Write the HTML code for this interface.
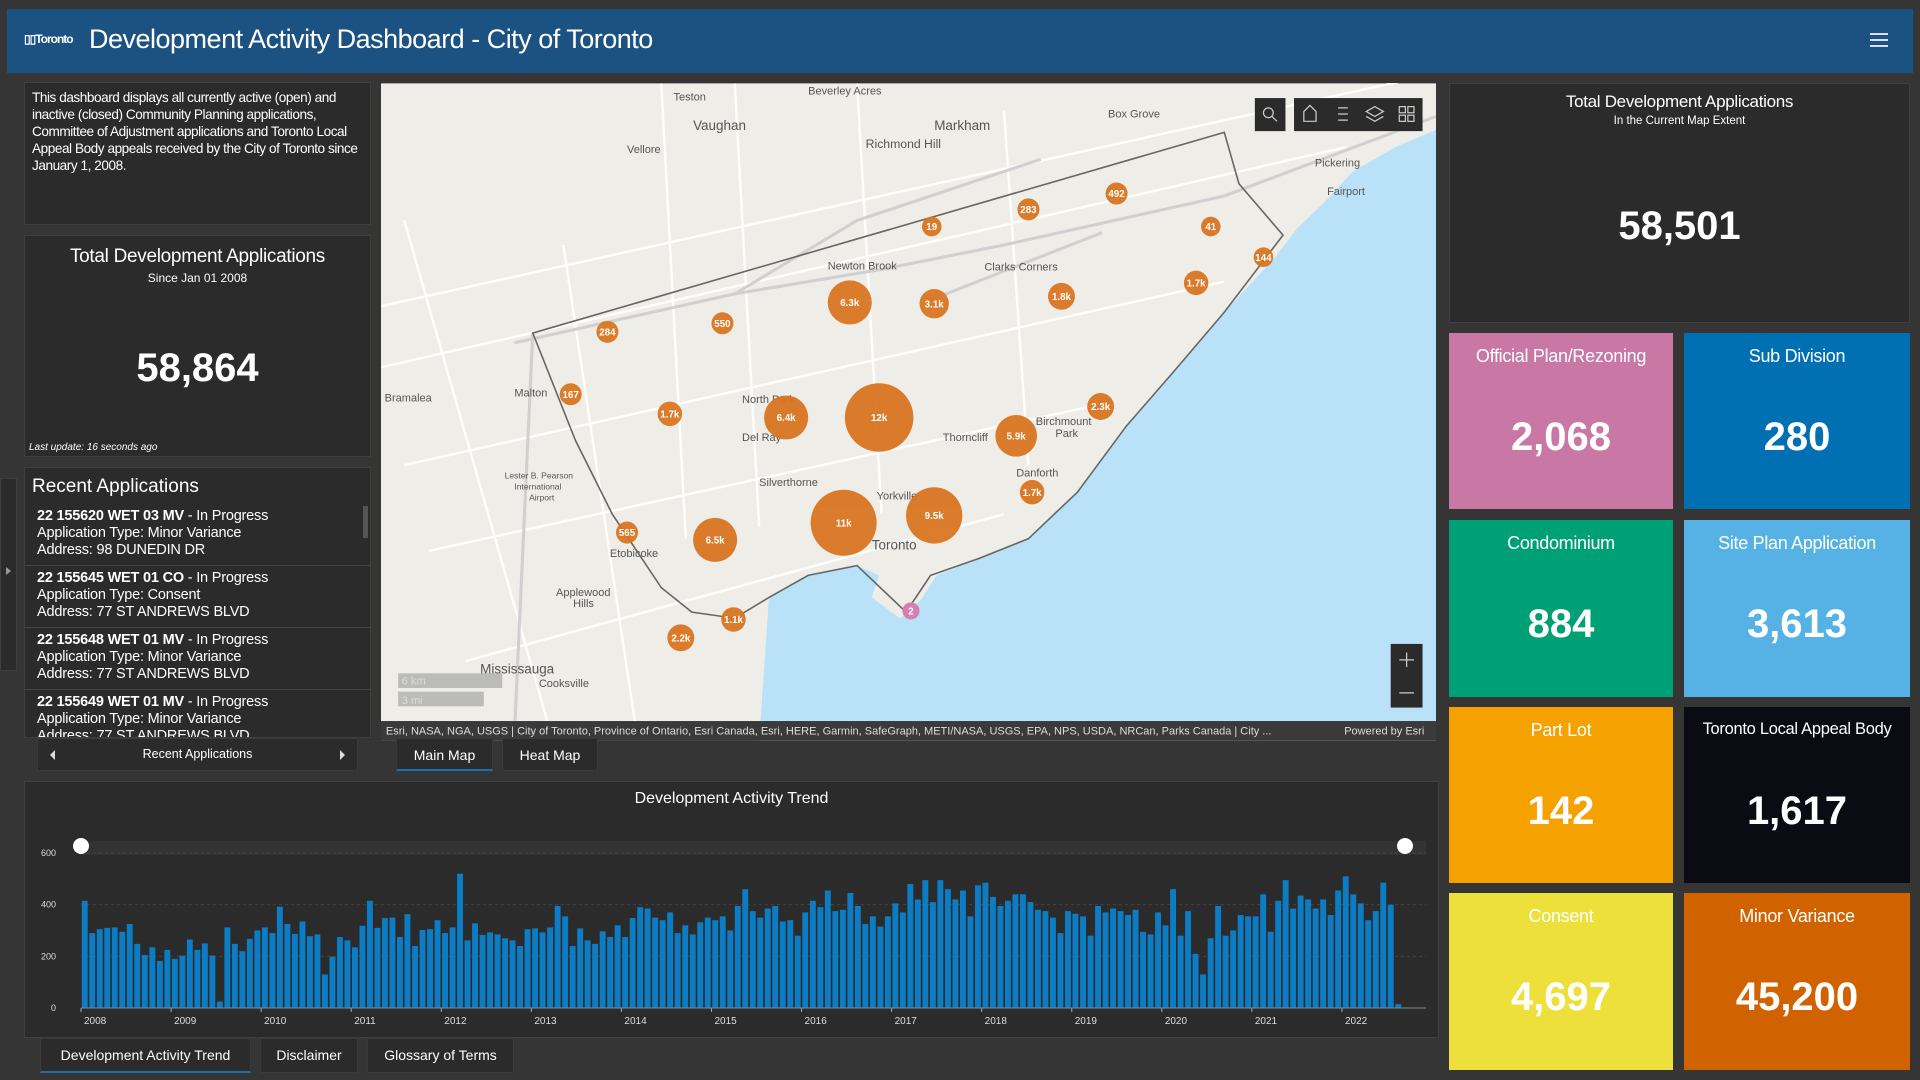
<!DOCTYPE html>
<html><head><meta charset="utf-8"><style>
*{box-sizing:border-box;margin:0;padding:0}
body{width:1920px;height:1080px;background:#353535;font-family:"Liberation Sans",sans-serif;color:#fff;position:relative;overflow:hidden}
.abs{position:absolute}
.panel{position:absolute;background:#2b2b2b;border:1px solid #3f3f3f}
.hdr{left:7px;top:9px;width:1906px;height:64px;background:#1c5282}
.tile{position:absolute;text-align:center;color:#fff}
.tile .t{position:absolute;top:13px;left:0;right:0;font-size:18px;letter-spacing:-0.3px}
.tile .n{position:absolute;top:82px;left:0;right:0;font-size:40px;font-weight:bold}
.item{border-bottom:1px solid #444;padding:4px 0 4px 12px;font-size:14.5px;line-height:17px;height:62px;letter-spacing:-0.2px}
.tab{position:absolute;background:#2b2b2b;border:1px solid #3a3a3a;font-size:14px;text-align:center;line-height:32px}
</style></head><body>
<div class="abs hdr"></div>
<div class="abs" style="left:24px;top:32px;font-size:12px;font-weight:bold;letter-spacing:-1px">▯▯Toronto</div>
<div class="abs" style="left:89px;top:24px;font-size:27px;letter-spacing:-0.5px">Development Activity Dashboard - City of Toronto</div>
<div class="abs" style="left:1870px;top:33px;width:18px;height:2px;background:#ddd;box-shadow:0 6px 0 #ddd,0 12px 0 #ddd"></div>

<div class="panel" style="left:24px;top:82px;width:347px;height:143px;padding:6px 7px;font-size:13.6px;line-height:17px;letter-spacing:-0.45px">This dashboard displays all currently active (open) and inactive (closed) Community Planning applications, Committee of Adjustment applications and Toronto Local Appeal Body appeals received by the City of Toronto since January 1, 2008.</div>

<div class="panel" style="left:24px;top:235px;width:347px;height:222px;text-align:center">
<div style="margin-top:10px;font-size:19px;letter-spacing:-0.3px">Total Development Applications</div>
<div style="font-size:12px;margin-top:3px">Since Jan 01 2008</div>
<div style="position:absolute;top:110px;left:0;right:0;font-size:40px;font-weight:bold">58,864</div>
<div style="position:absolute;left:4px;bottom:3px;font-size:10px;font-style:italic">Last update: 16 seconds ago</div>
</div>

<div class="abs" style="left:0;top:478px;width:17px;height:193px;background:#2b2b2b;border:1px solid #3f3f3f"><div style="position:absolute;top:88px;left:5px;width:0;height:0;border-left:5px solid #999;border-top:4px solid transparent;border-bottom:4px solid transparent"></div></div>

<div class="panel" style="left:24px;top:467px;width:347px;height:271px;overflow:hidden">
<div style="font-size:19px;padding:8px 7px 6px">Recent Applications</div>
<div class="item"><b>22 155620 WET 03 MV</b> - In Progress<br>Application Type: Minor Variance<br>Address: 98 DUNEDIN DR</div>
<div class="item"><b>22 155645 WET 01 CO</b> - In Progress<br>Application Type: Consent<br>Address: 77 ST ANDREWS BLVD</div>
<div class="item"><b>22 155648 WET 01 MV</b> - In Progress<br>Application Type: Minor Variance<br>Address: 77 ST ANDREWS BLVD</div>
<div class="item"><b>22 155649 WET 01 MV</b> - In Progress<br>Application Type: Minor Variance<br>Address: 77 ST ANDREWS BLVD</div>
<div style="position:absolute;right:2px;top:38px;width:5px;height:32px;background:#555"></div>
</div>
<div class="abs" style="left:37px;top:738px;width:321px;height:33px;background:#2b2b2b;border:1px solid #3a3a3a;font-size:12.5px;text-align:center;line-height:31px">Recent Applications
<span style="position:absolute;left:12px;top:11px;border-right:5px solid #ddd;border-top:5px solid transparent;border-bottom:5px solid transparent"></span>
<span style="position:absolute;right:12px;top:11px;border-left:5px solid #ddd;border-top:5px solid transparent;border-bottom:5px solid transparent"></span></div>

<!-- MAP -->
<svg class="abs" style="left:381px;top:83px" width="1055" height="658" viewBox="311 68 862 537" font-family="Liberation Sans,sans-serif">
<rect x="311" y="68" width="862" height="537" fill="#eeede8"/>
<path d="M620 605 L628 488 L660 470 L700 462 L718 470 L712 488 L735 505 L752 490 L765 470 L800 456 L840 440 L880 402 L920 348 L960 302 L1000 255 L1040 212 L1060 186 L1082 165 L1105 140 L1140 120 L1173 106 L1173 605 Z" fill="#b9e2f8"/>
<g stroke="#fff" stroke-width="2" fill="none" opacity=".9">
<path d="M311 250 L1173 60"/><path d="M311 300 L1100 120"/><path d="M330 380 L1000 230"/><path d="M350 450 L900 330"/>
<path d="M380 540 L820 420"/><path d="M540 68 L560 440"/><path d="M600 68 L620 430"/><path d="M700 68 L720 420"/><path d="M820 90 L840 380"/><path d="M460 200 L520 600"/><path d="M330 180 L450 600"/>
</g>
<g stroke="#d0d0d0" stroke-width="2.5" fill="none">
<path d="M420 280 L600 240 L720 220 L820 200 L1000 160 L1173 95"/><path d="M435 272 L420 600"/><path d="M600 240 L700 180 L850 130"/><path d="M760 245 L900 190"/>
</g>
<path d="M435 272 L1000 108 L1012 150 L1048 192 L1000 255 L960 302 L920 348 L880 402 L840 440 L800 456 L760 470 L740 500 L700 462 L660 470 L628 488 L600 505 L565 500 L540 480 L500 420 L470 360 Z" fill="none" stroke="#666" stroke-width="1.3"/>
<g fill="#555" font-size="9">
<text x="550" y="82">Teston</text><text x="660" y="77">Beverley Acres</text><text x="905" y="96">Box Grove</text>
<text x="566" y="106" font-size="11">Vaughan</text><text x="763" y="106" font-size="11">Markham</text><text x="707" y="121" font-size="10">Richmond Hill</text>
<text x="512" y="125">Vellore</text><text x="1074" y="136">Pickering</text><text x="1084" y="159">Fairport</text>
<text x="676" y="220">Newton Brook</text><text x="804" y="221">Clarks Corners</text><text x="314" y="328">Bramalea</text>
<text x="420" y="324">Malton</text><text x="620" y="397">Silverthorne</text><text x="770" y="360">Thorncliff</text>
<text x="846" y="347">Birchmount</text><text x="862" y="357">Park</text><text x="830" y="389">Danforth</text>
<text x="498" y="455">Etobicoke</text><text x="454" y="487">Applewood</text><text x="468" y="496">Hills</text>
<text x="392" y="550" font-size="11">Mississauga</text><text x="440" y="561">Cooksville</text>
<text x="412" y="391" font-size="7">Lester B. Pearson</text><text x="420" y="400" font-size="7">International</text><text x="432" y="409" font-size="7">Airport</text>
<text x="712" y="449" font-size="11">Toronto</text><text x="716" y="408">Yorkville</text><text x="606" y="329">North Park</text><text x="606" y="360">Del Ray</text>
</g>
<g fill="#d9731e" opacity=".93">
<circle cx="761" cy="185" r="8"/><circle cx="840" cy="171" r="9"/><circle cx="912" cy="158" r="9"/><circle cx="989" cy="185" r="8"/><circle cx="1032" cy="210" r="8"/><circle cx="977" cy="231" r="10"/><circle cx="867" cy="242" r="11"/><circle cx="694" cy="247" r="18"/><circle cx="763" cy="248" r="12"/><circle cx="590" cy="264" r="9"/><circle cx="496" cy="271" r="9"/><circle cx="466" cy="322" r="9"/><circle cx="547" cy="338" r="10"/><circle cx="642" cy="341" r="18"/><circle cx="718" cy="341" r="28"/><circle cx="899" cy="332" r="11"/><circle cx="830" cy="356" r="17"/><circle cx="843" cy="402" r="10"/><circle cx="763" cy="421" r="23"/><circle cx="689" cy="427" r="27"/><circle cx="512" cy="435" r="9"/><circle cx="584" cy="441" r="18"/><circle cx="599" cy="506" r="10"/><circle cx="556" cy="521" r="11"/>
</g>
<circle cx="744" cy="499" r="7" fill="#d67fb0"/>
<g fill="#fff" font-size="8" text-anchor="middle" font-weight="bold">
<text x="761" y="188">19</text><text x="840" y="174">283</text><text x="912" y="161">492</text><text x="989" y="188">41</text><text x="1032" y="213">144</text><text x="977" y="234">1.7k</text><text x="867" y="245">1.8k</text><text x="694" y="250">6.3k</text><text x="763" y="251">3.1k</text><text x="590" y="267">550</text><text x="496" y="274">284</text><text x="466" y="325">167</text><text x="547" y="341">1.7k</text><text x="642" y="344">6.4k</text><text x="718" y="344">12k</text><text x="899" y="335">2.3k</text><text x="830" y="359">5.9k</text><text x="843" y="405">1.7k</text><text x="763" y="424">9.5k</text><text x="689" y="430">11k</text><text x="512" y="438">565</text><text x="584" y="444">6.5k</text><text x="599" y="509">1.1k</text><text x="556" y="524">2.2k</text><text x="744" y="502">2</text>
</g>
<rect x="325" y="550" width="85" height="12" fill="#999" opacity=".6"/><rect x="325" y="565" width="70" height="12" fill="#999" opacity=".6"/>
<text x="328" y="559" font-size="9" fill="#ddd">6 km</text><text x="328" y="575" font-size="9" fill="#ddd">3 mi</text>
<rect x="1025" y="80" width="25" height="27" fill="#2b2b2b"/><rect x="1057" y="80" width="105" height="27" fill="#2b2b2b"/>
<g stroke="#ccc" fill="none" stroke-width="1"><circle cx="1036" cy="92" r="4"/><path d="M1039 95 L1043 99"/>
<path d="M1065 99 V91 L1070 86 L1075 91 V99 Z"/><path d="M1093 88h8M1093 93h8M1093 98h8"/><path d="M1116 91 L1123 87 L1130 91 L1123 95 Z M1116 95 L1123 99 L1130 95"/><rect x="1143" y="87" width="5" height="5"/><rect x="1150" y="87" width="5" height="5"/><rect x="1143" y="94" width="5" height="5"/><rect x="1150" y="94" width="5" height="5"/></g>
<rect x="1136" y="526" width="26" height="52" fill="#2b2b2b"/><path d="M1143 539h12M1149 533v12M1143 566h12" stroke="#ccc"/>
<rect x="311" y="589" width="862" height="16" fill="#3a3a3a"/>
<text x="315" y="600" font-size="9" fill="#ddd">Esri, NASA, NGA, USGS | City of Toronto, Province of Ontario, Esri Canada, Esri, HERE, Garmin, SafeGraph, METI/NASA, USGS, EPA, NPS, USDA, NRCan, Parks Canada | City ...</text>
<text x="1098" y="600" font-size="9" fill="#ddd">Powered by Esri</text>
</svg>
<div class="tab" style="left:396px;top:738px;width:97px;height:33px;border-bottom:2px solid #1c6fb0">Main Map</div>
<div class="tab" style="left:502px;top:738px;width:96px;height:33px">Heat Map</div>

<!-- CHART -->
<div class="panel" style="left:24px;top:781px;width:1415px;height:257px"></div>
<div class="abs" style="left:24px;top:790px;width:1415px;text-align:center;font-size:16px">Development Activity Trend</div>
<svg class="abs" style="left:24px;top:781px" width="1415" height="257" id="ch" font-family="Liberation Sans,sans-serif"></svg>
<div class="tab" style="left:40px;top:1038px;width:211px;height:35px;border-bottom:2px solid #1c6fb0">Development Activity Trend</div>
<div class="tab" style="left:260px;top:1038px;width:98px;height:35px">Disclaimer</div>
<div class="tab" style="left:367px;top:1038px;width:147px;height:35px">Glossary of Terms</div>

<!-- RIGHT -->
<div class="panel" style="left:1449px;top:83px;width:461px;height:240px;text-align:center">
<div style="margin-top:8px;font-size:17px;letter-spacing:-0.3px">Total Development Applications</div>
<div style="font-size:11.5px;margin-top:3px">In the Current Map Extent</div>
<div style="position:absolute;top:120px;left:0;right:0;font-size:40px;font-weight:bold">58,501</div>
</div>
<div class="tile" style="left:1449px;top:333px;width:224px;height:176px;background:#c978a6"><div class="t">Official Plan/Rezoning</div><div class="n">2,068</div></div>
<div class="tile" style="left:1684px;top:333px;width:226px;height:176px;background:#0070b2"><div class="t">Sub Division</div><div class="n">280</div></div>
<div class="tile" style="left:1449px;top:520px;width:224px;height:177px;background:#00a077"><div class="t">Condominium</div><div class="n">884</div></div>
<div class="tile" style="left:1684px;top:520px;width:226px;height:177px;background:#56b2e4"><div class="t">Site Plan Application</div><div class="n">3,613</div></div>
<div class="tile" style="left:1449px;top:707px;width:224px;height:176px;background:#f5a100"><div class="t">Part Lot</div><div class="n">142</div></div>
<div class="tile" style="left:1684px;top:707px;width:226px;height:176px;background:#0b0b14"><div class="t" style="font-size:16.5px">Toronto Local Appeal Body</div><div class="n">1,617</div></div>
<div class="tile" style="left:1449px;top:893px;width:224px;height:177px;background:#ede03a"><div class="t">Consent</div><div class="n">4,697</div></div>
<div class="tile" style="left:1684px;top:893px;width:226px;height:177px;background:#d06300"><div class="t">Minor Variance</div><div class="n">45,200</div></div>

<script>
var v=[415,290,305,310,312,295,325,248,205,235,182,225,190,203,265,225,250,203,25,312,248,220,268,300,312,290,392,325,287,335,278,285,130,198,275,262,235,318,415,310,348,350,275,363,240,302,305,340,290,312,520,262,328,283,293,285,270,262,240,305,308,293,312,395,355,240,308,262,248,297,275,320,275,348,390,385,350,340,370,290,320,285,332,350,340,355,300,395,460,375,350,385,395,335,340,280,370,415,390,455,375,380,445,395,325,355,315,355,405,370,480,420,495,410,495,460,420,455,355,475,485,430,395,415,440,440,410,380,375,350,290,375,365,355,280,395,370,385,375,360,380,295,285,370,320,460,280,375,210,130,270,395,280,300,360,355,355,440,295,415,495,385,435,420,385,420,360,455,510,440,405,340,375,485,400,15];
var s='',x0=57,w=1321/v.length,y0=227,k=155/600;
s+='<rect x="57" y="60" width="1345" height="14" fill="#333"/>';
[0,200,400,600].forEach(function(t){var y=y0-t*k;s+='<line x1="57" x2="1402" y1="'+y+'" y2="'+y+'" stroke="#444" stroke-dasharray="3,3"/><text x="32" y="'+(y+3)+'" font-size="9" fill="#ddd" text-anchor="end">'+t+'</text>';});
v.forEach(function(h,i){s+='<rect x="'+(x0+i*w+0.8).toFixed(1)+'" y="'+(y0-h*k).toFixed(1)+'" width="'+(w-1.6).toFixed(1)+'" height="'+(h*k).toFixed(1)+'" fill="#0c7cc4"/>';});
for(var yr=0;yr<15;yr++){var x=x0+yr*12*w;s+='<line x1="'+x+'" x2="'+x+'" y1="'+y0+'" y2="'+(y0+4)+'" stroke="#aaa"/><text x="'+(x+3)+'" y="'+(y0+16)+'" font-size="10" fill="#ddd">'+(2008+yr)+'</text>';}
s+='<line x1="57" x2="1402" y1="'+y0+'" y2="'+y0+'" stroke="#888"/>';
s+='<circle cx="57" cy="65" r="8" fill="#fff"/><circle cx="1381" cy="65" r="8" fill="#fff"/>';
document.getElementById('ch').innerHTML=s;
</script>
</body></html>
